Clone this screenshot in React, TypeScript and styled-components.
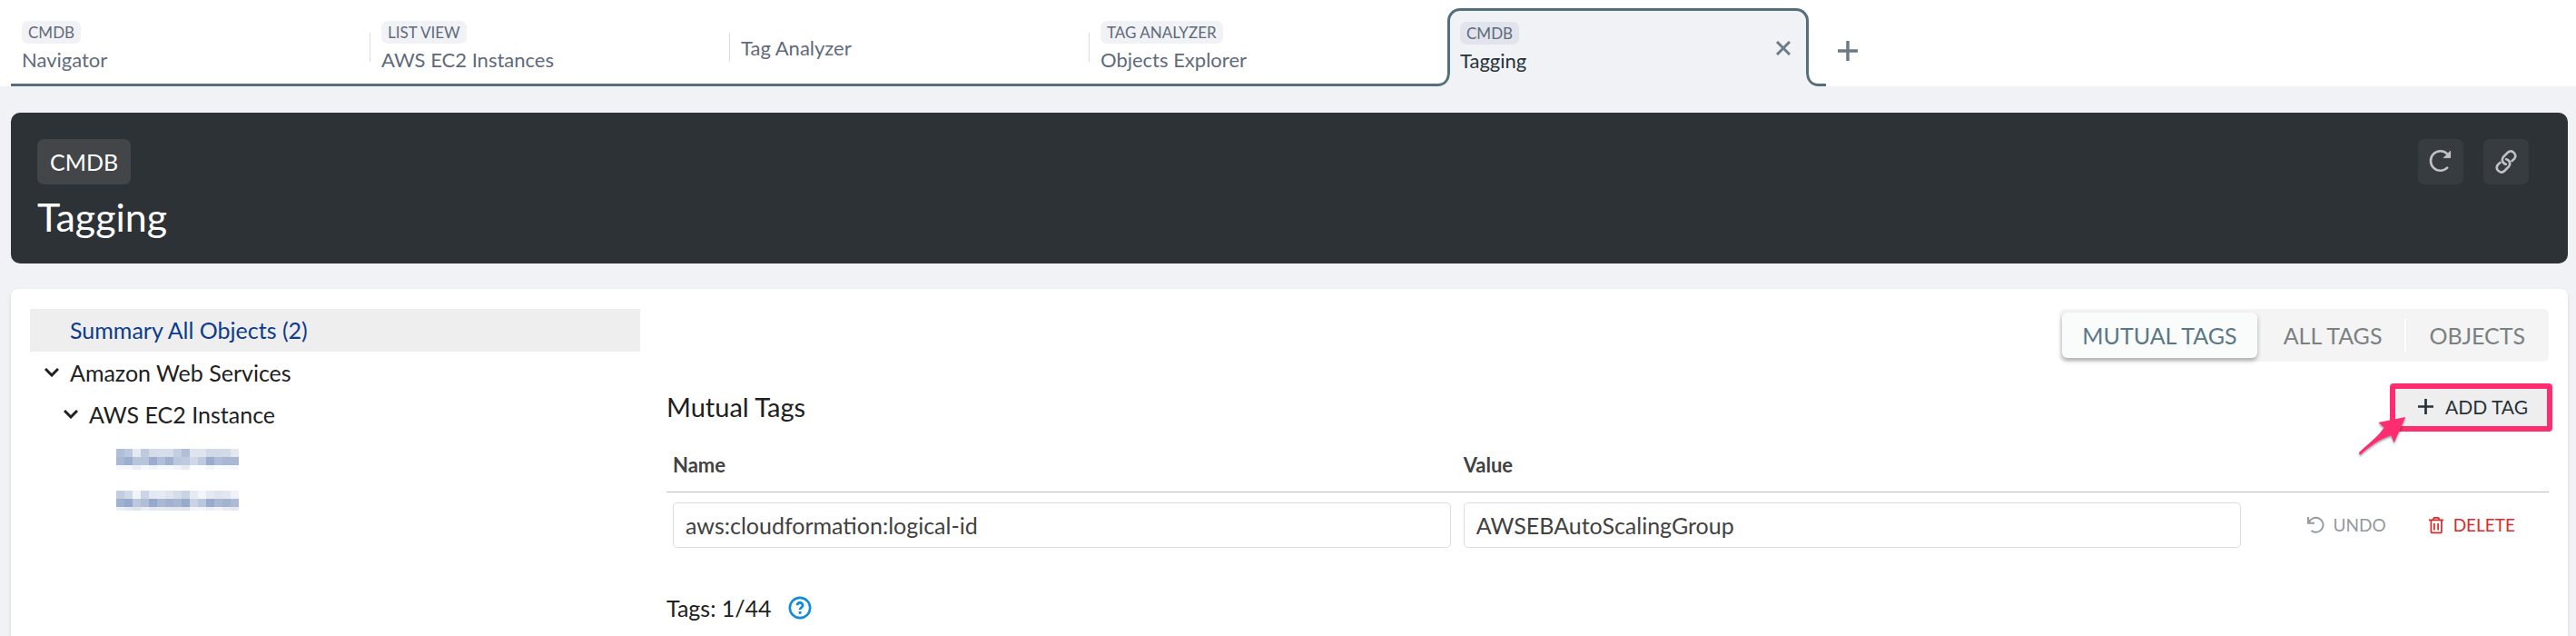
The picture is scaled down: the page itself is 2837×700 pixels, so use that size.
import React from "react";
import styled, { createGlobalStyle } from "styled-components";

const Global = createGlobalStyle`
  *, *::before, *::after { box-sizing: border-box; }
  html, body { margin: 0; min-height: 100%; background: #f1f2f6; }
  body { font-family: Lato, "Liberation Sans", sans-serif; color: #212121; }
  button, input { font-family: inherit; margin: 0; }
  button { border: 0; background: none; padding: 0; cursor: pointer; }
  svg { display: block; flex: none; }
  h1, h2 { margin: 0; font-weight: 400; }
`;

const Page = styled.div`
  display: flex;
  flex-direction: column;
  min-height: 100vh;
`;

const TabBar = styled.nav`
  display: flex;
  height: 95px;
  padding-left: 12px;
  background: #fff;
`;

const InactiveTabs = styled.div`
  display: flex;
  border-bottom: 3px solid #546e7a;
`;

const Tab = styled.button<{ $last?: boolean }>`
  display: flex;
  flex-direction: column;
  justify-content: center;
  align-items: flex-start;
  gap: 2px;
  width: 396px;
  padding: 13px 12px 0;
  font-size: 22px;
  line-height: 32px;
  color: #5f6b7a;
  background: linear-gradient(#dadce0, #dadce0) no-repeat right 0 top 36px / ${(p) => (p.$last ? "0 0" : "1px 32px")};
`;

const ActiveTab = styled.div`
  position: relative;
  display: flex;
  align-items: center;
  justify-content: space-between;
  width: 398px;
  margin: 9px 0 0 -2px;
  padding: 0 17px 1px 11px;
  border: 3px solid #546e7a;
  border-bottom: 0;
  border-radius: 14px 14px 0 0;
  background: #f1f2f6;
`;

const ActiveTabText = styled.button`
  display: flex;
  flex-direction: column;
  align-items: flex-start;
  gap: 2px;
  font-size: 22px;
  line-height: 32px;
  color: #263238;
`;

const TabChip = styled.span<{ $active?: boolean }>`
  padding: 0 7px;
  border-radius: 7px;
  font-size: 17px;
  line-height: 25px;
  background: ${(p) => (p.$active ? "#e1e4ec" : "#f1f2f6")};
  color: #5f6b7a;
`;

const FlareShape = styled.svg<{ $side: "left" | "right" }>`
  position: absolute;
  bottom: 0;
  ${(p) => (p.$side === "left" ? "right: 100%; transform: scaleX(-1);" : "left: 100%;")}
`;

const IconButton = styled.button`
  display: grid;
  place-items: center;
  color: #6d7a88;
`;

const NewTab = styled(IconButton)`
  width: 86px;
  padding-top: 16px;
`;

const Main = styled.main`
  flex: 1;
  display: flex;
  flex-direction: column;
  padding: 29px 9px 0 12px;
`;

const Header = styled.header`
  display: flex;
  justify-content: space-between;
  align-items: flex-start;
  height: 166px;
  padding: 29px 43px 0 29px;
  border-radius: 10px;
  background: #2d3236;
  color: #fff;
`;

const Heading = styled.div`
  display: flex;
  flex-direction: column;
  align-items: flex-start;
  gap: 10px;
`;

const HeaderChip = styled.span`
  padding: 0 14px;
  border-radius: 7px;
  font-size: 25px;
  line-height: 50px;
  background: #424649;
`;

const Title = styled.h1`
  font-size: 43px;
  line-height: 52px;
`;

const HeaderActions = styled.div`
  display: flex;
  gap: 22px;
`;

const HeaderButton = styled.button`
  display: grid;
  place-items: center;
  width: 50px;
  height: 50px;
  border-radius: 7px;
  background: #373c40;
  color: #c0c2c3;
`;

const Card = styled.section`
  flex: 1;
  display: flex;
  gap: 29px;
  margin-top: 28px;
  padding: 22px 21px 0;
  border-radius: 8px 8px 0 0;
  background: #fff;
  box-shadow: 0 2px 4px rgba(0, 0, 0, 0.12);
`;

const Tree = styled.div`
  flex: 0 0 672px;
`;

const TreeRow = styled.button<{ $indent: number; $selected?: boolean }>`
  display: flex;
  align-items: center;
  gap: 12px;
  width: 100%;
  height: ${(p) => (p.$selected ? 47 : 46)}px;
  padding: ${(p) => (p.$selected ? "0 0 2px" : "0")};
  padding-left: ${(p) => p.$indent}px;
  font-size: 25px;
  line-height: 44px;
  color: ${(p) => (p.$selected ? "#0d3c8c" : "#212121")};
  background: ${(p) => (p.$selected ? "#eeeeee" : "transparent")};
`;

const Content = styled.div`
  flex: 1;
`;

const Segments = styled.div`
  display: flex;
  align-items: center;
  width: fit-content;
  height: 58px;
  margin-left: auto;
  padding: 0 1px 0 3px;
  border-radius: 6px;
  background: #f4f4f4;
`;

const Segment = styled.button<{ $active?: boolean }>`
  height: 50px;
  padding: ${(p) => (p.$active ? "0 22px" : "0 25px")};
  margin-right: ${(p) => (p.$active ? "4px" : "0")};
  border-radius: 6px;
  font-size: 25px;
  color: ${(p) => (p.$active ? "#5b7786" : "#7b8183")};
  background: ${(p) => (p.$active ? "#fafcfc" : "transparent")};
  box-shadow: ${(p) => (p.$active ? "0 3px 5px rgba(0, 0, 0, 0.3)" : "none")};
`;

const Divider = styled.span`
  width: 2px;
  height: 36px;
  background: #fff;
`;

const SectionHead = styled.div`
  display: flex;
  justify-content: space-between;
  align-items: center;
  height: 53px;
  margin: 24px -4px 0 0;
`;

const SectionTitle = styled.h2`
  padding-bottom: 2px;
  font-size: 29px;
  line-height: 38px;
`;

const Highlight = styled.div`
  position: relative;
  border: 6px solid #ff2d6f;
  border-radius: 4px;
`;

const AddButton = styled.button`
  display: flex;
  align-items: center;
  gap: 13px;
  height: 41px;
  padding: 0 21px 2px 25px;
  font-size: 21px;
  color: #263238;
  background: #eeeeee;
`;

const Arrow = styled.svg`
  position: absolute;
  left: -41px;
  top: 29px;
  overflow: visible;
  filter: drop-shadow(0 2px 1px rgba(0, 0, 0, 0.35));
`;

const Table = styled.table`
  width: 100%;
  border-collapse: collapse;
  table-layout: fixed;
`;

const Th = styled.th<{ $width?: string }>`
  width: ${(p) => p.$width || "auto"};
  height: 66px;
  padding: 7px 7px 0;
  border-bottom: 1px solid #bdbdbd;
  text-align: left;
  font-size: 22px;
  font-weight: 700;
  color: #424242;
`;

const Td = styled.td`
  padding: 11px 7px 0;
`;

const Field = styled.input`
  display: block;
  width: 100%;
  height: 50px;
  padding: 0 13px;
  border: 1px solid #dcdcdc;
  border-radius: 5px;
  background: #fff;
  font-size: 25px;
  color: #424242;
  outline: 0;
`;

const RowActions = styled.div`
  display: flex;
  justify-content: flex-end;
  gap: 46px;
  padding-right: 30px;
`;

const TextButton = styled.button<{ $danger?: boolean }>`
  display: flex;
  align-items: center;
  gap: 10px;
  font-size: 19px;
  color: ${(p) => (p.$danger ? "#d92b2b" : "#93999c")};
`;

const Count = styled.div`
  display: flex;
  align-items: center;
  gap: 18px;
  margin-top: 46px;
  font-size: 25px;
  line-height: 40px;
`;

const HelpButton = styled(IconButton)`
  color: #0f8cda;
`;

const Flare = ({ side }: { side: "left" | "right" }) => (
  <FlareShape $side={side} width="22" height="16" viewBox="0 0 22 16">
    <path d="M0 0h22v16H0z" fill="#fff" />
    <path d="M0 0H1.5C1.5 9 6 14.5 14 14.5H22V16H0z" fill="#f1f2f6" />
    <path d="M1.5 0C1.5 9 6 14.5 14 14.5H22" fill="none" stroke="#546e7a" strokeWidth="3" />
  </FlareShape>
);

const Chevron = () => (
  <svg width="16" height="10" viewBox="0 0 16 10" fill="none" stroke="currentColor" strokeWidth="3">
    <path d="M1 1l7 7 7-7" />
  </svg>
);

const Plus = ({ size }: { size: number }) => (
  <svg width={size} height={size} viewBox="0 0 22 22" fill="none" stroke="currentColor" strokeWidth="3.5">
    <path d="M11 0v22M0 11h22" />
  </svg>
);

const RefreshIcon = () => (
  <svg width="26" height="26" viewBox="0 0 26 26" fill="none" stroke="currentColor" strokeWidth="2.6" strokeLinecap="round">
    <path d="M20.2 19.6A10.7 10.7 0 1 1 20.2 4.4" />
    <path d="M23.6 1.6V8.6H16.6z" fill="currentColor" strokeWidth="1" strokeLinejoin="round" />
  </svg>
);

const LinkIcon = () => (
  <svg width="26" height="26" viewBox="0 0 26 26" fill="none" stroke="currentColor" strokeWidth="2.6" strokeLinecap="round">
    <path d="M12.9 15.8A5 5 0 0 1 10.1 7.6L15.1 2.6A5 5 0 0 1 22.1 9.6L19.5 12.2" />
    <path d="M13.1 10.2A5 5 0 0 1 15.9 18.4L10.9 23.4A5 5 0 0 1 3.9 16.4L6.5 13.8" />
  </svg>
);

const UndoIcon = () => (
  <svg width="20" height="20" viewBox="0 0 20 20" fill="none" stroke="currentColor" strokeWidth="1.9">
    <path d="M2 1V7.7H9" />
    <path d="M3 7A8 8 0 1 1 5.5 16" />
  </svg>
);

const TrashIcon = () => (
  <svg width="18" height="20" viewBox="0 0 18 20" fill="none" stroke="currentColor" strokeWidth="1.7" strokeLinejoin="round">
    <path d="M1 4.4H17M3.4 4.4V17.3a1 1 0 0 0 1 1H13.9a1 1 0 0 0 1-1V4.4" />
    <path d="M5.5 4L6.8 1.8H11.3L12.6 4M6.9 8V15.5M11.1 8V15.5" />
  </svg>
);

const HelpIcon = () => (
  <svg width="26" height="26" viewBox="0 0 24 24" fill="none" stroke="currentColor" strokeWidth="2.4">
    <circle cx="12" cy="12" r="10.3" />
    <path d="M9.2 9.4a2.8 2.8 0 0 1 5.6 .2c0 1.7-2.7 2.2-2.7 4.2M12.1 15.8v2.4" strokeWidth="2.6" />
  </svg>
);

const ArrowMark = () => (
  <Arrow width="54" height="46" viewBox="0 0 54 46">
    <path
      d="M52.3 2L22.3 8L28.7 13.5C22 24 10 32 1 41.2Q.8 43.5 3 43.2C12 35 24 26 36.3 22.3L39.7 30.3z"
      fill="#ff2d6f"
    />
  </Arrow>
);

const firstRow = [
  ["#b1bed8", "#bcc8de", "#e4e9f2", "#bfcade", "#d5dce8", "#d7ddea", "#d7ddea", "#c5cee0", "#b1bed8", "#dfe4ee", "#dfe4ee", "#d0d9e6", "#d0d9e6", "#d3dae8", "#e3e7f0"],
  ["#a9b8d5", "#9dafcf", "#b7c5da", "#b7c5da", "#9bacce", "#b1bed9", "#a0b0cf", "#bbc7dc", "#bfcade", "#d0d8e7", "#bfcadf", "#9badcd", "#b0bdd8", "#a8b7d4", "#a8b7d4"],
  ["#f6f8fb", "#f6f8fb", "#eaeef6", "#f6f8fb", "#f0f3f8", "#f6f8fb", "#f6f8fb", "#f0f3f8", "#e6eaf3", "#fcfdfe", "#fcfdfe", "#f4f6fa", "#fafbfd", "#fafbfd", "#f6f8fb"],
];

const secondRow = [
  ["#c3cde0", "#d1d9e7", "#f0f4f9", "#cbd5e6", "#e3e8f2", "#e6eaf2", "#e0e6ef", "#d5dde8", "#c9d3e4", "#e6eaf3", "#f2f5f9", "#e4e9f2", "#dfe4ee", "#e2e7f1", "#eff2f8"],
  ["#a0b0cf", "#97a9cc", "#bbc8dd", "#b0bed8", "#96a8cb", "#aab8d4", "#a3b1d0", "#a8b6d3", "#98aacc", "#cad3e4", "#bbc7dd", "#99abcd", "#a9b8d4", "#a3b2d1", "#adbad6"],
  ["#ebeff6", "#e4e9f2", "#dfe5f0", "#ebeef6", "#e3e8f2", "#e6e9f3", "#e3e7f2", "#e3e7f1", "#dfe4ef", "#f4f5fa", "#f4f5fa", "#eceff6", "#f2f4f9", "#e8ebf4", "#e4e8f2"],
];

const Redacted = ({ tones, foot }: { tones: string[][]; foot: number }) => (
  <svg width="135" height="32" shapeRendering="crispEdges">
    {tones.map((row, r) =>
      row.map((fill, c) => (
        <rect key={`${r}-${c}`} x={c * 9} y={8 + r * 9} width="9" height={r === 2 ? foot : 9} fill={fill} />
      ))
    )}
  </svg>
);

const tabs = [
  { chip: "CMDB", label: "Navigator" },
  { chip: "LIST VIEW", label: "AWS EC2 Instances" },
  { label: "Tag Analyzer" },
  { chip: "TAG ANALYZER", label: "Objects Explorer" },
];

export default function App() {
  return (
    <Page>
      <Global />
      <TabBar>
        <InactiveTabs>
          {tabs.map((tab, i) => (
            <Tab key={tab.label} $last={i === tabs.length - 1}>
              {tab.chip && <TabChip>{tab.chip}</TabChip>}
              <span>{tab.label}</span>
            </Tab>
          ))}
        </InactiveTabs>
        <ActiveTab>
          <Flare side="left" />
          <ActiveTabText>
            <TabChip $active>CMDB</TabChip>
            <span>Tagging</span>
          </ActiveTabText>
          <IconButton aria-label="Close tab">
            <svg width="16" height="16" viewBox="0 0 16 16" fill="none" stroke="currentColor" strokeWidth="3">
              <path d="M1 1l14 14M15 1L1 15" />
            </svg>
          </IconButton>
          <Flare side="right" />
        </ActiveTab>
        <NewTab aria-label="New tab">
          <Plus size={22} />
        </NewTab>
      </TabBar>
      <Main>
        <Header>
          <Heading>
            <HeaderChip>CMDB</HeaderChip>
            <Title>Tagging</Title>
          </Heading>
          <HeaderActions>
            <HeaderButton aria-label="Refresh"><RefreshIcon /></HeaderButton>
            <HeaderButton aria-label="Copy link"><LinkIcon /></HeaderButton>
          </HeaderActions>
        </Header>
        <Card>
          <Tree>
            <TreeRow $indent={44} $selected>Summary All Objects (2)</TreeRow>
            <TreeRow $indent={16}><Chevron />Amazon Web Services</TreeRow>
            <TreeRow $indent={37}><Chevron />AWS EC2 Instance</TreeRow>
            <TreeRow $indent={95} aria-label="Instance 1"><Redacted tones={firstRow} foot={5} /></TreeRow>
            <TreeRow $indent={95} aria-label="Instance 2"><Redacted tones={secondRow} foot={4} /></TreeRow>
          </Tree>
          <Content>
            <Segments>
              <Segment $active>MUTUAL TAGS</Segment>
              <Segment>ALL TAGS</Segment>
              <Divider />
              <Segment>OBJECTS</Segment>
            </Segments>
            <SectionHead>
              <SectionTitle>Mutual Tags</SectionTitle>
              <Highlight>
                <AddButton><Plus size={17} />ADD TAG</AddButton>
                <ArrowMark />
              </Highlight>
            </SectionHead>
            <Table>
              <thead>
                <tr>
                  <Th $width="42%">Name</Th>
                  <Th $width="42%">Value</Th>
                  <Th aria-label="Actions" />
                </tr>
              </thead>
              <tbody>
                <tr>
                  <Td><Field aria-label="Name" defaultValue="aws:cloudformation:logical-id" /></Td>
                  <Td><Field aria-label="Value" defaultValue="AWSEBAutoScalingGroup" /></Td>
                  <Td>
                    <RowActions>
                      <TextButton><UndoIcon />UNDO</TextButton>
                      <TextButton $danger><TrashIcon />DELETE</TextButton>
                    </RowActions>
                  </Td>
                </tr>
              </tbody>
            </Table>
            <Count>
              Tags: 1/44
              <HelpButton aria-label="Help"><HelpIcon /></HelpButton>
            </Count>
          </Content>
        </Card>
      </Main>
    </Page>
  );
}
